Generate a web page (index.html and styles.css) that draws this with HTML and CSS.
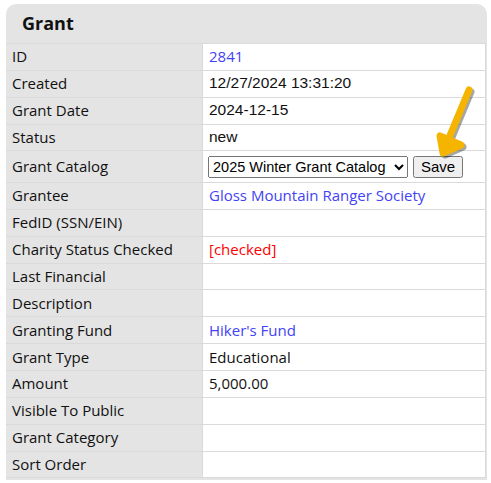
FILE: index.html
```html
<!DOCTYPE html>
<html lang="en">
<head>
    <meta charset="UTF-8">
    <meta name="viewport" content="width=device-width, initial-scale=1.0">
    <title>Grant</title>
    <link rel="stylesheet" href="styles.css">
</head>
<body>
    <div class="panel">
        <h2 class="panel-title">Grant</h2>
        <table class="details">
            <tr><td class="label">ID</td><td class="value"><a href="#">2841</a></td></tr>
            <tr><td class="label">Created</td><td class="value plain">12/27/2024 13:31:20</td></tr>
            <tr><td class="label">Grant Date</td><td class="value plain">2024-12-15</td></tr>
            <tr><td class="label">Status</td><td class="value plain">new</td></tr>
            <tr class="tall">
                <td class="label">Grant Catalog</td>
                <td class="value">
                    <select class="catalog">
                        <option>2025 Winter Grant Catalog</option>
                        <option>2025 Summer Grant Catalog</option>
                    </select>
                    <button class="save">Save</button>
                </td>
            </tr>
            <tr><td class="label">Grantee</td><td class="value"><a href="#">Gloss Mountain Ranger Society</a></td></tr>
            <tr><td class="label">FedID (SSN/EIN)</td><td class="value"></td></tr>
            <tr><td class="label">Charity Status Checked</td><td class="value"><span class="flag">[checked]</span></td></tr>
            <tr><td class="label">Last Financial</td><td class="value"></td></tr>
            <tr><td class="label">Description</td><td class="value"></td></tr>
            <tr><td class="label">Granting Fund</td><td class="value"><a href="#">Hiker's Fund</a></td></tr>
            <tr><td class="label">Grant Type</td><td class="value">Educational</td></tr>
            <tr><td class="label">Amount</td><td class="value">5,000.00</td></tr>
            <tr><td class="label">Visible To Public</td><td class="value"></td></tr>
            <tr><td class="label">Grant Category</td><td class="value"></td></tr>
            <tr><td class="label">Sort Order</td><td class="value"></td></tr>
        </table>
        <!-- callout pointing at the Save button -->
        <svg class="pointer" width="50" height="80" viewBox="0 0 50 80">
            <g transform="translate(2,2)" stroke="rgba(0,0,0,0.35)" fill="rgba(0,0,0,0.35)" stroke-width="7" stroke-linecap="round" stroke-linejoin="round">
                <path d="M38 7 L15 62" fill="none"/>
                <path d="M9 53 L12 70 L30 62" fill="none"/>
            </g>
            <g stroke="#f5b400" fill="#f5b400" stroke-width="7" stroke-linecap="round" stroke-linejoin="round">
                <path d="M38 7 L15 62" fill="none"/>
                <path d="M9 53 L12 70 L30 62 Z"/>
            </g>
        </svg>
    </div>
</body>
</html>
```

FILE: styles.css
```css
body {
    font-family: "Open Sans", sans-serif;
    font-size: 15px;
    color: #111;
    background: white;
    margin: 0;
    padding: 4px 4px 0 6px;
}

.panel {
    position: relative;
    background: #e4e4e4;
    border-radius: 10px 10px 0 0;
    padding: 0 1px 2px 0;
}

.panel-title {
    margin: 0;
    height: 39px;
    line-height: 38px;
    padding-left: 16px;
    font-size: 18px;
    font-weight: bold;
    color: #111;
}

.details {
    width: 100%;
    border-collapse: collapse;
}

.details tr {
    height: 26.85px;
}

.details tr.tall {
    height: 31.7px;
}

.details td {
    border: 1px solid #dadada;
    padding: 0 6px 1px;
    vertical-align: middle;
}

.label {
    width: 184px;
    border-left: none !important;
}

.value {
    background: white;
}

.plain {
    font-family: "Liberation Sans", Arial, sans-serif;
    font-size: 15.5px;
}

a {
    color: #4343f5;
    text-decoration: none;
}

.flag {
    color: #f00;
}

.catalog {
    font-family: "Liberation Sans", Arial, sans-serif;
    font-size: 14.5px;
    width: 200px;
    height: 22px;
    margin: 0 0 0 -1px;
    vertical-align: middle;
}

.save {
    font-family: "Liberation Sans", Arial, sans-serif;
    font-size: 15px;
    height: 22px;
    padding: 0 6px;
    margin-left: 1px;
    vertical-align: middle;
}

.pointer {
    position: absolute;
    left: 425px;
    top: 79px;
}
```
